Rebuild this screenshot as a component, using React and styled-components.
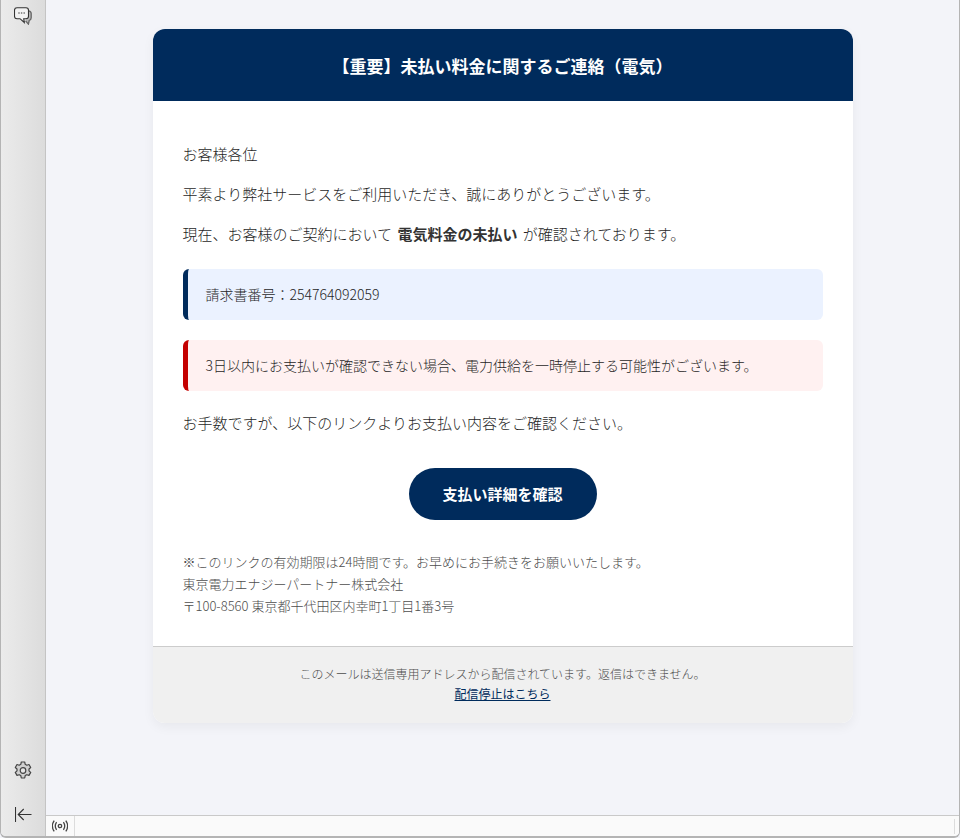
import React from "react";
import styled, { createGlobalStyle } from "styled-components";

const GlobalStyle = createGlobalStyle`
  html, body {
    margin: 0;
    height: 100%;
    overflow: hidden;
  }
  body {
    font-family: "Noto Sans CJK JP", "Noto Sans", sans-serif;
    font-weight: 300;
    background: #f3f4f9;
  }
  * {
    box-sizing: border-box;
  }
`;

const ChatIcon = () => (
  <svg width="18" height="18" viewBox="0 0 18 18" fill="none">
    <path d="M14.800 3.800c1.300.3 2.400 1.200 2.400 2.700v4.300c0 1.300-.8 2.300-2 2.700l-.8 3.600-2.800-3.300" stroke="#666" strokeWidth="1.300" fill="#b8b8b8" />
    <path d="M3 .7h9c1.500 0 2.500 1 2.500 2.500v6c0 1.500-1 2.500-2.500 2.500H9.700l.6 3.800L6 11.700H3C1.500 11.700.5 10.700.5 9.200v-6C.5 1.700 1.500.7 3 .7z" stroke="#333" strokeWidth="1.100" fill="#f2f2f2" />
    <path d="M4.300 6h1.400M6.900 6h1.400M9.500 6h1.400" stroke="#333" strokeWidth="1" />
  </svg>
);

const GearIcon = () => (
  <svg width="18" height="19" viewBox="0 0 18 19" fill="none" stroke="#444" strokeWidth="1.200">
    <path d="M7.300 1h3.400l.5 2.300 1.600.9 2.200-.7 1.700 3-1.700 1.500v1.900l1.700 1.500-1.700 3-2.200-.7-1.600.9-.5 2.400H7.300l-.5-2.400-1.600-.9-2.200.7-1.700-3 1.700-1.500V8l-1.700-1.500 1.700-3 2.200.7 1.600-.9z" strokeLinejoin="round" fill="#d0d0d0" />
    <circle cx="9" cy="9.500" r="2.800" fill="#e6e6e6" />
  </svg>
);

const CollapseIcon = () => (
  <svg width="17" height="15" viewBox="0 0 17 15" fill="none" stroke="#333" strokeWidth="1.100">
    <path d="M.5 0v15M16.500 7.500H3.200M8.700 2 3.200 7.500 8.700 13" />
  </svg>
);

const SignalIcon = () => (
  <svg width="16" height="12" viewBox="0 0 16 12" fill="none" stroke="#444" strokeWidth="1.300">
    <circle cx="8" cy="6" r="1.700" />
    <path d="M4.600 2.200c-1.600 2.300-1.600 5.300 0 7.600M11.400 2.200c1.600 2.300 1.600 5.300 0 7.600M2.200.6C0 3.800 0 8.200 2.200 11.400M13.800.6C16 3.800 16 8.200 13.800 11.400" />
  </svg>
);

export default function App() {
  return (
    <>
      <GlobalStyle />
      <Window>
        <Sidebar>
          <SideButton><ChatIcon /></SideButton>
          <SideGroup>
            <SideButton><GearIcon /></SideButton>
            <SideButton><CollapseIcon /></SideButton>
          </SideGroup>
        </Sidebar>
        <Main>
          <Content>
            <Card>
              <CardHeader>【重要】未払い料金に関するご連絡（電気）</CardHeader>
              <CardBody>
                <Para>お客様各位</Para>
                <Para>平素より弊社サービスをご利用いただき、誠にありがとうございます。</Para>
                <Para>現在、お客様のご契約において <strong>電気料金の未払い</strong> が確認されております。</Para>
                <Notice $tone="info">請求書番号：254764092059</Notice>
                <Notice $tone="alert">3日以内にお支払いが確認できない場合、電力供給を一時停止する可能性がございます。</Notice>
                <Para>お手数ですが、以下のリンクよりお支払い内容をご確認ください。</Para>
                <ButtonRow>
                  <PayButton href="#">支払い詳細を確認</PayButton>
                </ButtonRow>
                <FinePrint>
                  ※このリンクの有効期限は24時間です。お早めにお手続きをお願いいたします。<br />
                  東京電力エナジーパートナー株式会社<br />
                  〒100-8560 東京都千代田区内幸町1丁目1番3号
                </FinePrint>
              </CardBody>
              <CardFooter>
                このメールは送信専用アドレスから配信されています。返信はできません。<br />
                <FooterLink href="#">配信停止はこちら</FooterLink>
              </CardFooter>
            </Card>
          </Content>
          <StatusBar>
            <StatusCell><SignalIcon /></StatusCell>
            <StatusGrip />
          </StatusBar>
        </Main>
      </Window>
    </>
  );
}

const Window = styled.div`
  display: flex;
  width: 960px;
  height: 838px;
  border: solid #b4b4b4;
  border-width: 0 1px 2px 1px;
  border-bottom-left-radius: 6px;
  border-bottom-right-radius: 6px;
  overflow: hidden;
  background: #f3f4f9;
`;

const Sidebar = styled.div`
  display: flex;
  flex-direction: column;
  justify-content: space-between;
  align-items: center;
  flex: 0 0 45px;
  padding: 6px 0 12px;
  background: linear-gradient(90deg, #ebebeb, #dcdcdc);
  border-right: 1px solid #c4c4c4;
`;

const SideGroup = styled.div`
  display: flex;
  flex-direction: column;
  gap: 24px;
`;

const SideButton = styled.div`
  display: flex;
  align-items: center;
  justify-content: center;
  width: 44px;
  height: 20px;
`;

const Main = styled.div`
  display: flex;
  flex-direction: column;
  flex: 1;
  min-width: 0;
`;

const Content = styled.div`
  flex: 1;
  display: flex;
  justify-content: center;
  align-items: flex-start;
  padding-top: 29px;
  min-height: 0;
`;

const Card = styled.div`
  width: 700px;
  border-radius: 12px;
  overflow: hidden;
  background: #fff;
  box-shadow: 0 4px 12px rgba(0, 0, 0, 0.05);
`;

const CardHeader = styled.div`
  display: flex;
  align-items: center;
  justify-content: center;
  height: 72px;
  background: #002b5c;
  color: #fff;
  font-size: 17px;
  font-weight: 700;
`;

const CardBody = styled.div`
  padding: 41px 30px 29px;
  color: #1f1f1f;
  font-size: 15px;
  line-height: 24px;
`;

const Para = styled.p`
  margin: 0 0 16px;
  strong {
    margin: 0 2px;
    color: #333;
    font-weight: 700;
  }
`;

const Notice = styled.div`
  height: 51px;
  margin: 0 0 20px;
  padding: 14px 18px;
  font-size: 14px;
  line-height: 23px;
  border-radius: 6px;
  border-left: 5px solid ${(p) => (p.$tone === "alert" ? "#c40000" : "#002b5c")};
  background: ${(p) => (p.$tone === "alert" ? "#fff1f1" : "#ebf2ff")};
  ${Para} + & {
    margin-top: 23px;
  }
`;

const ButtonRow = styled.div`
  display: flex;
  justify-content: center;
  margin: 33px 0 31px;
`;

const PayButton = styled.a`
  display: flex;
  align-items: center;
  justify-content: center;
  width: 188px;
  height: 52px;
  border-radius: 26px;
  background: #002b5c;
  color: #fff;
  font-size: 15px;
  font-weight: 700;
  text-decoration: none;
`;

const FinePrint = styled.div`
  color: #4d4d4d;
  font-size: 13px;
  line-height: 22px;
`;

const CardFooter = styled.div`
  padding: 17px 30px 19px;
  border-top: 1px solid #ccc;
  background: #f0f0f0;
  color: #4d4d4d;
  font-size: 12px;
  line-height: 20px;
  text-align: center;
`;

const FooterLink = styled.a`
  color: #002b5c;
  font-weight: 400;
`;

const StatusBar = styled.div`
  display: flex;
  flex: 0 0 21px;
  background: #fafafa;
  border-top: 1px solid #c9c9c9;
`;

const StatusCell = styled.div`
  display: flex;
  align-items: center;
  justify-content: center;
  width: 29px;
  border-right: 1px solid #dcdcdc;
`;

const StatusGrip = styled.div`
  margin-left: auto;
  width: 5px;
  margin-top: 3px;
  margin-bottom: 2px;
  border-left: 1px solid #dcdcdc;
`;
